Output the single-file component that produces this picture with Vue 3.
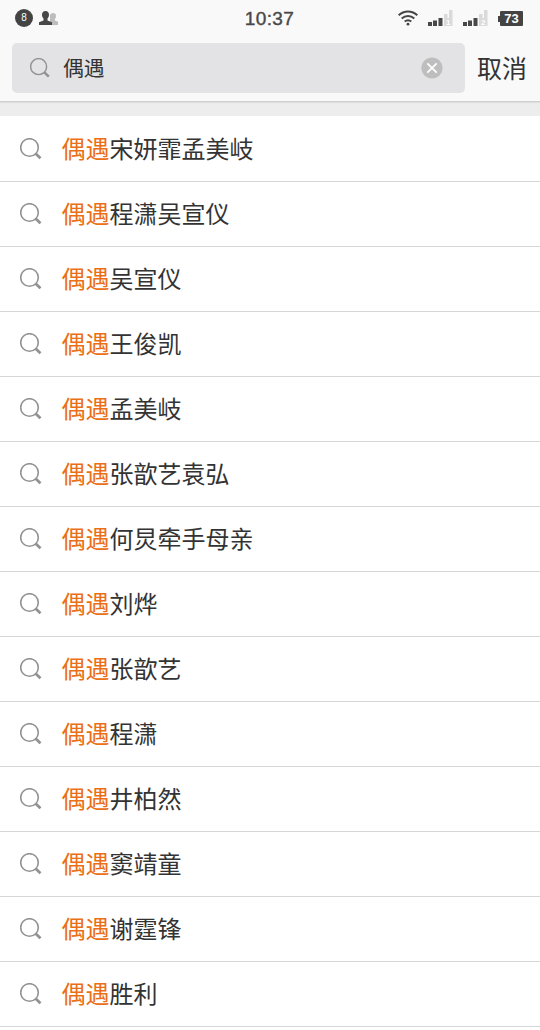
<template>
  <div class="page">
    <header class="header">
      <div class="status-bar">
        <div class="status-left">
          <span class="notice">8</span>
          <svg class="contacts" width="20" height="16" viewBox="0 0 20 16">
            <path fill="#bdbdbd" d="M14 3c2 0 3 1.200 3 3 0 1.500-.5 2.500-1.200 3.200v1.300l3.200 1.200V15h-8V5c.5-1.300 1.500-2 3-2z" />
            <path fill="#484848" d="M6.500 1c2.200 0 3.500 1.500 3.500 3.700 0 1.700-.7 3-1.500 3.800v2l4.500 1.700V15H0v-2.800l4.500-1.700v-2C3.700 7.700 3 6.400 3 4.700 3 2.500 4.300 1 6.500 1z" />
          </svg>
        </div>
        <span class="clock">10:37</span>
        <div class="status-right">
          <svg class="wifi" width="20" height="16" viewBox="0 0 20 16" fill="none" stroke="#454545" stroke-width="2">
            <path d="M.7 5.300C6 .2 14 .2 19.300 5.300" />
            <path d="M3.700 8.500c3.700-3.400 8.900-3.400 12.600 0" />
            <path d="M6.700 11.600c2-1.700 4.600-1.700 6.600 0" />
            <circle cx="10" cy="14.200" r="1.400" fill="#454545" stroke="none" />
          </svg>
          <svg v-for="sim in [1, 2]" :key="sim" class="signal" width="25" height="17" viewBox="0 0 25 17">
            <path fill="#484848" d="M0 12h4v4H0zM5 10.500h4V16H5zM10.500 8h4v8h-4z" />
            <path fill="#dadada" d="M16 4h3.500v4H21V0h3.500v16H16z" />
            <text x="20.300" y="14.800" text-anchor="middle">{{ sim }}</text>
          </svg>
          <span class="battery">73</span>
        </div>
      </div>
      <div class="search-bar">
        <div class="search-box">
          <svg class="search-icon" width="20" height="20" viewBox="0 0 22 22">
            <circle cx="9.500" cy="9.500" r="8.800" />
            <path d="M15.500 15.500l5.200 5" />
          </svg>
          <span class="keyword">{{ keyword }}</span>
          <svg class="clear" width="22" height="22" viewBox="0 0 22 22">
            <circle cx="11" cy="11" r="10.600" fill="#bebebf" />
            <path d="M6.300 6.300l9.400 9.400M15.700 6.300l-9.400 9.400" stroke="#fff" stroke-width="1.700" />
          </svg>
        </div>
        <span class="cancel">取消</span>
      </div>
    </header>
    <ul class="list">
      <li v-for="item in suggestions" :key="item" class="item">
        <svg class="search-icon" width="22" height="22" viewBox="0 0 22 22">
          <circle cx="9.500" cy="9.500" r="8.800" />
          <path d="M15.500 15.500l5 4.800" />
        </svg>
        <span class="text"><em>{{ keyword }}</em>{{ item }}</span>
      </li>
    </ul>
  </div>
</template>

<script setup>
import { ref } from "vue";

const keyword = ref("偶遇");
const suggestions = ref([
  "宋妍霏孟美岐",
  "程潇吴宣仪",
  "吴宣仪",
  "王俊凯",
  "孟美岐",
  "张歆艺袁弘",
  "何炅牵手母亲",
  "刘烨",
  "张歆艺",
  "程潇",
  "井柏然",
  "窦靖童",
  "谢霆锋",
  "胜利",
]);
</script>

<style>
body {
  margin: 0;
  background: #fff;
}
</style>

<style scoped>
.page {
  height: 1030px;
  overflow: hidden;
  background: #fff;
  color: #333;
  font-family: Roboto, "Noto Sans CJK SC", sans-serif;
}

.header {
  position: relative;
  box-sizing: border-box;
  height: 102px;
  background: #f9f9f9;
  border-bottom: 1px solid #d0d0d0;
  box-shadow: 0 1px 1px #dedede;
}

.status-bar {
  display: grid;
  grid-template-columns: 1fr auto 1fr;
  align-items: center;
  height: 36px;
  padding: 0 17px 0 15px;
}

.status-left,
.status-right {
  display: flex;
  align-items: center;
}

.status-right {
  justify-content: flex-end;
}

.notice {
  width: 18px;
  height: 18px;
  border-radius: 50%;
  background: #444;
  color: #fff;
  font: 10px/18px "Liberation Sans", sans-serif;
  text-align: center;
}

.contacts {
  margin-left: 6px;
}

.clock {
  padding: 2px 0 0 1px;
  color: #484848;
  font: 19px/34px "Liberation Sans", sans-serif;
  letter-spacing: 0.4px;
  -webkit-text-stroke: 0.4px #484848;
}

.wifi {
  margin-right: 10px;
}

.signal {
  margin-right: 10px;
}

.signal text {
  fill: #fff;
  font: bold 8px "Liberation Sans", sans-serif;
}

.battery {
  position: relative;
  width: 23px;
  height: 15px;
  margin-left: 2px;
  border-radius: 1px;
  background: #444;
  color: #fff;
  font: bold 13px/15px "Liberation Sans", sans-serif;
  text-align: center;
}

.battery::before {
  content: "";
  position: absolute;
  left: -2px;
  top: 5px;
  width: 2px;
  height: 6px;
  background: #444;
}

.search-bar {
  display: flex;
  align-items: center;
  padding: 7px 12px 0;
}

.search-box {
  box-sizing: border-box;
  display: flex;
  align-items: center;
  width: 453px;
  height: 50px;
  padding: 0 22px 0 18px;
  border-radius: 5px;
  background: #e3e3e5;
}

.search-icon {
  flex: none;
  fill: none;
  stroke: #929292;
  stroke-width: 1.6;
}

.search-icon path {
  stroke-width: 2.8;
}

.keyword {
  flex: 1;
  margin-left: 13px;
  padding-top: 2px;
  font-size: 20.8px;
  line-height: 48px;
}

.cancel {
  margin-left: 12px;
  padding-top: 4px;
  font-size: 25px;
  line-height: 46px;
  white-space: nowrap;
}

.list {
  margin: 0;
  padding: 0;
  list-style: none;
  border-top: 14px solid #ededed;
}

.item {
  box-sizing: border-box;
  display: flex;
  align-items: center;
  height: 65px;
  padding-left: 20px;
  border-bottom: 1px solid #d6d6d6;
}

.item:first-child {
  height: 66px;
}

.text {
  margin-left: 19.5px;
  padding-top: 2px;
  font-size: 24px;
  line-height: 62px;
}

.text em {
  color: #eb6f16;
  font-style: normal;
}
</style>
